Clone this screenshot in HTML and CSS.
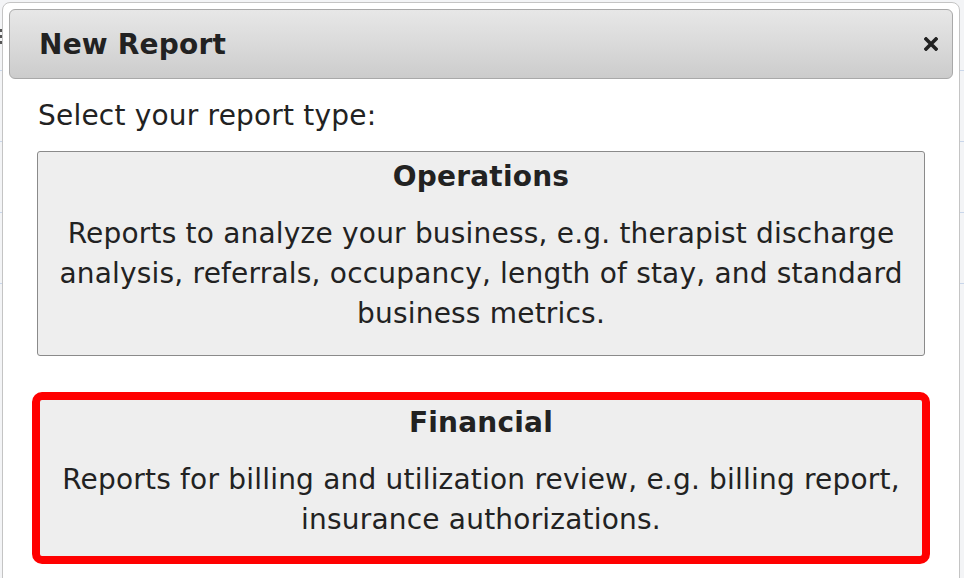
FILE: index.html
```html
<!DOCTYPE html>
<html lang="en">
<head>
<meta charset="utf-8">
<title>New Report</title>
<link rel="stylesheet" href="styles.css">
</head>
<body>
<div class="page">
  <div class="page-menu"><span></span><span></span><span></span></div>
  <div class="page-rows"><span></span><span></span><span></span><span></span></div>
</div>
<div class="dialog" role="dialog" aria-labelledby="dlg-title">
  <div class="dialog-header">
    <h2 id="dlg-title" class="dialog-title">New Report</h2>
    <button class="dialog-close" aria-label="Close">
      <svg width="14" height="14" viewBox="0 0 14 14"><path d="M2 2 L12 12 M12 2 L2 12" stroke="#222" stroke-width="3.6" stroke-linecap="square"/></svg>
    </button>
  </div>
  <div class="dialog-body">
    <p class="prompt">Select your report type:</p>
    <div class="report-option">
      <h3 class="option-title">Operations</h3>
      <p class="option-desc">Reports to analyze your business, e.g. therapist discharge analysis, referrals, occupancy, length of stay, and standard business metrics.</p>
    </div>
    <div class="report-option selected">
      <h3 class="option-title">Financial</h3>
      <p class="option-desc">Reports for billing and utilization review, e.g. billing report, insurance authorizations.</p>
    </div>
  </div>
</div>
</body>
</html>
```

FILE: styles.css
```css
html, body {
  margin: 0;
  padding: 0;
}
body {
  width: 964px;
  height: 578px;
  overflow: hidden;
  background: #f3f4f6;
  font-family: "DejaVu Sans", Verdana, sans-serif;
  color: #222;
  position: relative;
}
.page {
  position: absolute;
  inset: 0;
}
.page-menu {
  position: absolute;
  left: -6px;
  top: 29px;
  display: flex;
  flex-direction: column;
  gap: 3px;
}
.page-menu span {
  display: block;
  width: 9px;
  height: 3px;
  background: #555;
}
.page-rows {
  position: absolute;
  left: 0;
  right: 0;
  top: 0;
}
.page-rows span {
  display: block;
  height: 1px;
  background: #c9d6ea;
  margin-top: 70px;
}
.dialog {
  position: absolute;
  left: 2px;
  top: 2px;
  width: 958px;
  height: 600px;
  background: #fff;
  border: 1px solid #c4c4c4;
  border-radius: 8px;
  padding: 6px 6px 0;
  box-sizing: border-box;
}
.dialog-header {
  display: flex;
  align-items: center;
  justify-content: space-between;
  height: 70px;
  box-sizing: border-box;
  border: 1px solid #a9a9a9;
  border-radius: 6px;
  background: linear-gradient(to bottom, #e7e7e7 0%, #dadada 50%, #cccccc 100%);
  padding: 0 14px 0 29px;
}
.dialog-title {
  margin: 0;
  font-size: 28px;
  font-weight: bold;
  letter-spacing: 0.2px;
  color: #222;
}
.dialog-close {
  border: 0;
  background: none;
  padding: 0;
  width: 14px;
  height: 14px;
  display: flex;
}
.dialog-body {
  padding: 0 28px;
  letter-spacing: 0.2px;
}
.prompt {
  margin: 17px 0 0;
  font-size: 28px;
  line-height: 40px;
  padding-left: 1px;
}
.report-option {
  margin-top: 15px;
  background: #eeeeee;
  border: 1px solid #8a8a8a;
  border-radius: 3px;
  padding: 5px 18px 21px;
  text-align: center;
}
.report-option.selected {
  margin: 36px -5px 0;
  border: 8px solid #ff0000;
  border-radius: 10px;
  padding: 3px 16px 16px;
}
.option-title {
  margin: 0;
  font-size: 28px;
  line-height: 40px;
  font-weight: bold;
}
.option-desc {
  margin: 17px 0 0;
  font-size: 28px;
  line-height: 40px;
}
```
